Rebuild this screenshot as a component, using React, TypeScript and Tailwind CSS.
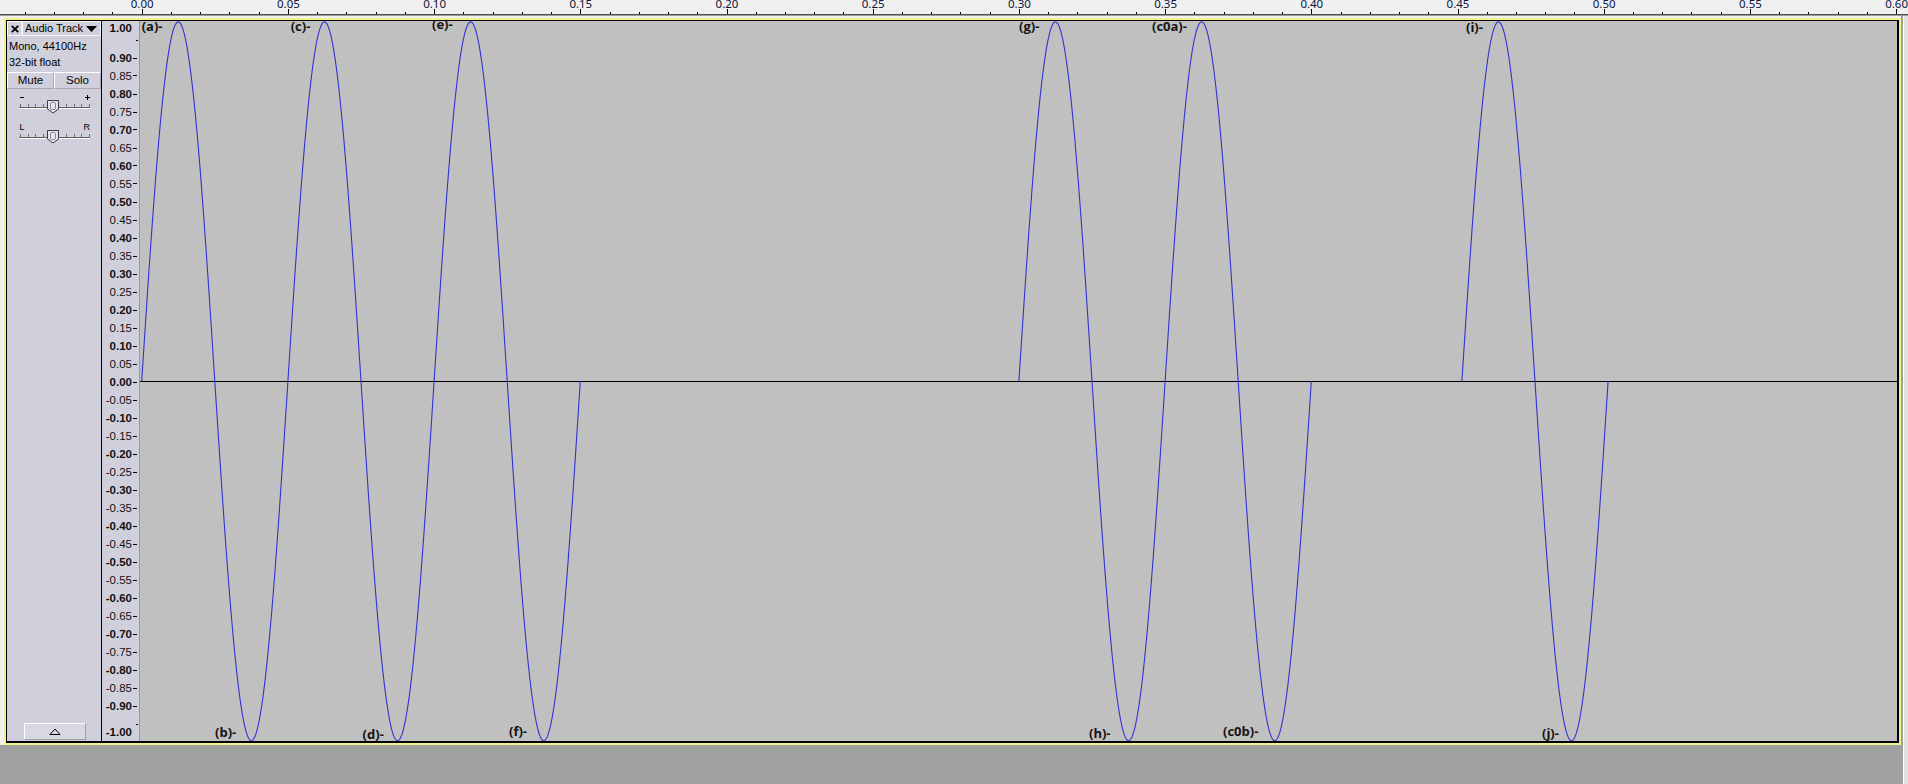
import React from 'react';

// time axis: page x of t=0 and pixels per second
const RULER_X0 = 141.7;
const PX_PER_SEC = 2924;
// waveform area starts at page x 140
const WAVE_X0 = RULER_X0 - 140;
const ZERO_Y = 360.3;
const AMP = 359.4;

const SEGMENTS: [number, number][] = [
  [0, 0.15],
  [0.3, 0.4],
  [0.4515, 0.5015],
];

const LABELS = [
  { text: '(a)-', x: 1.7, y: -1 },
  { text: '(c)-', x: 150.7, y: -1 },
  { text: '(e)-', x: 292, y: -3.2 },
  { text: '(g)-', x: 879, y: -1 },
  { text: '(c0a)-', x: 1012, y: -1 },
  { text: '(i)-', x: 1326, y: -0.5 },
  { text: '(b)-', x: 75, y: 705.3 },
  { text: '(d)-', x: 222.6, y: 707 },
  { text: '(f)-', x: 369, y: 704.3 },
  { text: '(h)-', x: 949, y: 706.3 },
  { text: '(c0b)-', x: 1083, y: 704.3 },
  { text: '(j)-', x: 1402, y: 706.3 },
];

function wavePoints(t0: number, t1: number) {
  const pts: string[] = [];
  const steps = Math.ceil((t1 - t0) * PX_PER_SEC * 2);
  for (let s = 0; s <= steps; s++) {
    const t = t0 + ((t1 - t0) * s) / steps;
    const x = WAVE_X0 + t * PX_PER_SEC;
    const y = ZERO_Y - AMP * Math.sin(2 * Math.PI * 20 * (t - t0));
    pts.push(`${x.toFixed(2)},${y.toFixed(2)}`);
  }
  return pts.join(' ');
}

function TimeRuler() {
  const ticks: number[] = [];
  for (let k = -4; k <= 60; k++) ticks.push(k);
  return (
    <div className="relative h-[14px] bg-[#f0f0f0] overflow-hidden">
      <svg width={1908} height={14} className="absolute left-0 top-0">
        {ticks.map((k) => {
          const x = Math.round(RULER_X0 + k * 29.24);
          const major = k % 5 === 0;
          return <rect key={k} x={x} y={major ? 9 : 12} width={1} height={major ? 5 : 2} fill="#000" />;
        })}
      </svg>
      {ticks
        .filter((k) => k >= 0 && k % 5 === 0)
        .map((k) => (
          <span
            key={k}
            className="absolute top-[-2.5px] -translate-x-1/2 text-[11.5px] leading-[11.5px] text-[#0c1440] whitespace-nowrap"
            style={{ left: RULER_X0 + k * 29.24 + 0.5 }}
          >
            {(k * 0.01).toFixed(2)}
          </span>
        ))}
    </div>
  );
}

function Slider({ kind }: { kind: 'gain' | 'pan' }) {
  const lineY = kind === 'gain' ? 18 : 20;
  const thumbTop = kind === 'gain' ? 11 : 13;
  const ticks = Array.from({ length: 10 }, (_, j) => 13 + j * 7.67);
  return (
    <svg width={94} height={28} className="block">
      {kind === 'gain' ? (
        <g stroke="#000" strokeWidth={1}>
          <line x1={13} y1={8.5} x2={17} y2={8.5} />
          <line x1={78} y1={8.5} x2={83} y2={8.5} />
          <line x1={80.5} y1={6} x2={80.5} y2={11} />
        </g>
      ) : (
        <g fontFamily="Liberation Sans, Arial, sans-serif" fontSize={9} fill="#000">
          <text x={12.5} y={13}>L</text>
          <text x={76.5} y={13}>R</text>
        </g>
      )}
      {ticks.map((x, i) => (
        <line key={i} x1={Math.round(x) + 0.5} y1={lineY - 3} x2={Math.round(x) + 0.5} y2={lineY} stroke="#707070" />
      ))}
      <line x1={12} y1={lineY + 0.5} x2={83} y2={lineY + 0.5} stroke="#606060" />
      <line x1={12} y1={lineY + 1.5} x2={83} y2={lineY + 1.5} stroke="#ffffff" />
      <path
        d={`M40.5 ${thumbTop + 0.5} H51.5 V${thumbTop + 9} L46 ${thumbTop + 13} L40.5 ${thumbTop + 9} Z`}
        fill="#e4e4ec"
        stroke="#3c3c3c"
      />
      <line x1={43.5} y1={thumbTop + 3} x2={43.5} y2={thumbTop + 9} stroke="#8a8a96" />
      <line x1={48.5} y1={thumbTop + 3} x2={48.5} y2={thumbTop + 9} stroke="#8a8a96" />
      <line x1={44} y1={thumbTop + 2.5} x2={48} y2={thumbTop + 2.5} stroke="#8a8a96" />
      <line x1={44} y1={thumbTop + 9.5} x2={48} y2={thumbTop + 9.5} stroke="#8a8a96" />
    </svg>
  );
}

function TrackPanel() {
  return (
    <div className="w-[95px] shrink-0 border-r border-black bg-[#d0d0dc] flex flex-col text-black font-['Liberation_Sans',Arial,sans-serif]">
      <div className="flex h-[15px]">
        <div className="w-[15px] border border-t-white border-l-white border-r-[#f4f4f8] border-b-[#f4f4f8] flex items-center justify-center">
          <svg width={8} height={8} viewBox="0 0 8 8">
            <path d="M0.8 0.8 L7.2 7.2 M7.2 0.8 L0.8 7.2" stroke="#000" strokeWidth={1.9} />
          </svg>
        </div>
        <div className="flex-1 flex items-center justify-between pl-[2px] pr-[3px] border border-[#f4f4f8]">
          <span className="text-[11px] leading-none whitespace-nowrap">Audio Track</span>
          <svg width={11} height={6} viewBox="0 0 11 6">
            <path d="M0 0 H11 L5.5 6 Z" fill="#000" />
          </svg>
        </div>
      </div>
      <div className="pt-[2px] pl-[2px] text-[11px] leading-[16px] whitespace-nowrap">
        <div>Mono, 44100Hz</div>
        <div>32-bit float</div>
      </div>
      <div className="flex h-[17px] mt-[2px] text-[11.5px] leading-none">
        <div className="w-[47px] flex items-center justify-center border border-t-white border-l-white border-r-[#a8a8b4] border-b-[#a8a8b4]">
          Mute
        </div>
        <div className="flex-1 flex items-center justify-center border border-t-white border-l-white border-r-[#a8a8b4] border-b-[#a8a8b4]">
          Solo
        </div>
      </div>
      <Slider kind="gain" />
      <Slider kind="pan" />
      <div className="flex-1" />
      <div className="ml-[17px] mb-[1px] w-[62px] h-[17px] border border-t-white border-l-white border-r-[#a0a0a0] border-b-[#a0a0a0] bg-[#d8d8e2] flex items-center justify-center">
        <svg width={12} height={7} viewBox="0 0 12 7">
          <path d="M1 6.5 H11 L6 1 Z" fill="none" stroke="#000" />
        </svg>
      </div>
    </div>
  );
}

function AmpRuler() {
  const rows: number[] = [];
  for (let i = 20; i >= -20; i--) rows.push(i);
  return (
    <div className="relative w-[38px] shrink-0 border-r border-[#9a9a9a] bg-[#d0d0dc] font-['Liberation_Sans',Arial,sans-serif]">
      {rows.map((i) => {
        const v = i * 0.05;
        const tickY = 360.5 - 360 * v;
        if (Math.abs(i) === 19) {
          return <div key={i} className="absolute left-[34px] w-[2px] h-[1px] bg-black" style={{ top: Math.round(tickY) }} />;
        }
        const top = i === 20 ? 2.4 : i === -20 ? 705.9 : tickY - 4.8;
        return (
          <React.Fragment key={i}>
            <span
              className={`absolute right-[7px] text-[11.5px] leading-[11.5px] text-[#101010] whitespace-nowrap ${i % 2 === 0 ? 'font-bold' : 'font-normal'}`}
              style={{ top }}
            >
              {v.toFixed(2)}
            </span>
            {Math.abs(i) !== 20 && (
              <div className="absolute left-[31px] w-[4px] h-[1px] bg-black" style={{ top: Math.round(tickY) }} />
            )}
          </React.Fragment>
        );
      })}
    </div>
  );
}

function Waveform() {
  return (
    <div className="relative w-[1757px] shrink-0 bg-[#c0c0c0]">
      <svg width={1757} height={720} className="absolute left-0 top-0">
        <rect x={0} y={360} width={1757} height={1} fill="#000" />
        {SEGMENTS.map(([a, b], i) => (
          <polyline key={i} points={wavePoints(a, b)} fill="none" stroke="#3232d0" strokeWidth={1.1} />
        ))}
      </svg>
      {LABELS.map((l) => (
        <span
          key={l.text}
          className="absolute font-['Open_Sans',sans-serif] font-bold text-[13px] leading-[13px] text-[#141414] whitespace-nowrap"
          style={{ left: l.x, top: l.y }}
        >
          {l.text}
        </span>
      ))}
    </div>
  );
}

export default function App() {
  return (
    <div className="w-[1908px] h-[784px] bg-[#a0a0a0] flex flex-col overflow-hidden">
      <TimeRuler />
      <div className="h-[1px] bg-[#505050]" />
      <div className="h-[1px] bg-[#9a9a9a]" />
      <div className="flex flex-1">
        <div className="flex-1 flex flex-col">
          <div className="w-fit bg-[#f0f0f0] pl-[4px] pt-[2px]">
            <div className="border-2 border-[#f2f28c]">
              <div className="flex h-[723px] border-black border-l border-t border-r-2 border-b-2">
                <TrackPanel />
                <AmpRuler />
                <Waveform />
              </div>
            </div>
          </div>
        </div>
        <div className="w-[5px] bg-[#e2e2e2] border-l border-white" />
      </div>
    </div>
  );
}
